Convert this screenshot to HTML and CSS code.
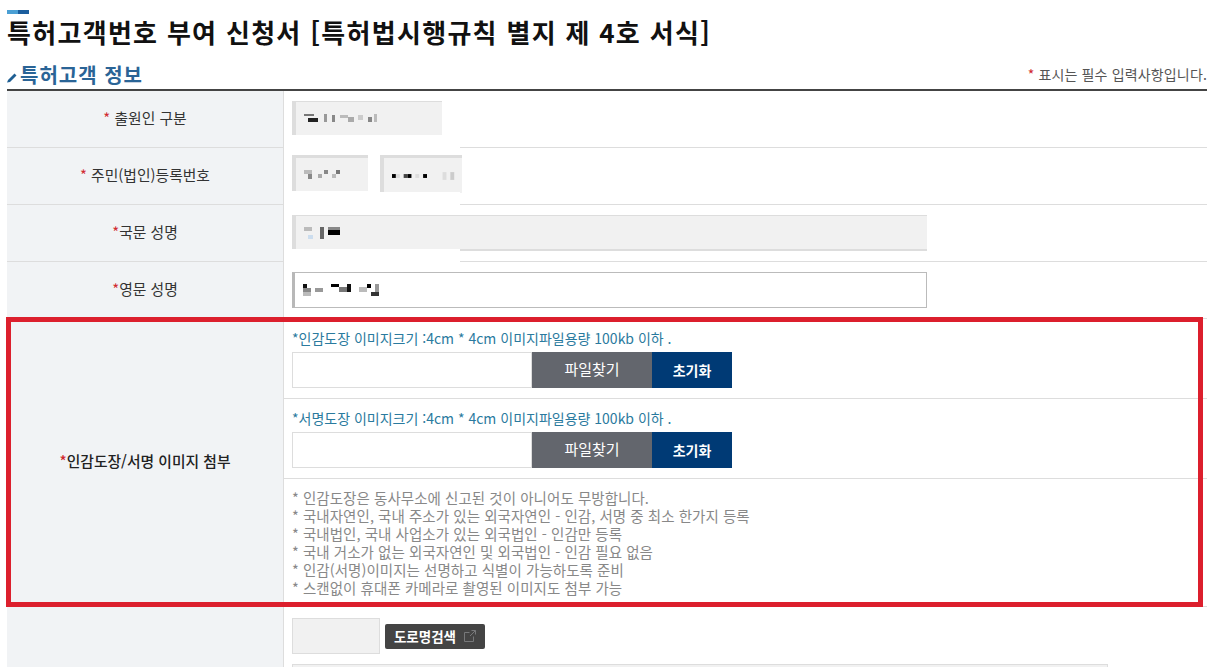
FILE: index.html
```html
<!DOCTYPE html>
<html lang="ko">
<head>
    <meta charset="UTF-8">
    <title>특허고객번호 부여 신청서</title>
    <link rel="stylesheet" href="styles.css">
</head>
<body>
    <div class="page">
        <div class="title-mark"></div>
        <h1>특허고객번호 부여 신청서 [특허법시행규칙 별지 제 4호 서식]</h1>

        <div class="section-head">
            <h2>
                <svg class="pencil" width="10" height="10" viewBox="0 0 10 10"><path d="M0 9.5 L1 7 L7.5 0.5 L9.5 2.5 L3 9 Z" fill="#1f5f93"/></svg>특허고객 정보
            </h2>
            <p class="required-note"><span class="star">*</span> 표시는 필수 입력사항입니다.</p>
        </div>

        <div class="form">
            <div class="row row-plain">
                <div class="label"><span><span class="star">*</span> 출원인 구분</span></div>
                <div class="cell">
                    <div class="field field-kind">
                        <svg class="mosaic" width="76" height="10" viewBox="0 0 76 10">
                            <rect x="0" y="0" width="10" height="2" fill="#777"/><rect x="4" y="4" width="10" height="4" fill="#222"/><rect x="20" y="0" width="3" height="8" fill="#999"/><rect x="28" y="1" width="3" height="7" fill="#888"/><rect x="36" y="1" width="8" height="3" fill="#bbb"/><rect x="44" y="3" width="6" height="5" fill="#aaa"/><rect x="54" y="1" width="5" height="5" fill="#ccc"/><rect x="64" y="3" width="4" height="5" fill="#888"/><rect x="70" y="0" width="3" height="8" fill="#bbb"/>
                        </svg>
                    </div>
                    <div class="patch"></div>
                </div>
            </div>
            <div class="row row-plain">
                <div class="label"><span><span class="star">*</span> 주민(법인)등록번호</span></div>
                <div class="cell cell-pair">
                    <div class="field field-short">
                        <svg class="mosaic" width="44" height="10" viewBox="0 0 44 10">
                            <rect x="0" y="0" width="8" height="4" fill="#bbb"/><rect x="4" y="4" width="4" height="5" fill="#888"/><rect x="14" y="4" width="4" height="4" fill="#aaa"/><rect x="20" y="0" width="4" height="4" fill="#888"/><rect x="28" y="4" width="4" height="4" fill="#bbb"/><rect x="32" y="0" width="4" height="4" fill="#777"/>
                        </svg>
                    </div>
                    <div class="field field-short2">
                        <svg class="mosaic" width="72" height="8" viewBox="0 0 72 8">
                            <rect x="0" y="2" width="4" height="4" fill="#000"/><rect x="4" y="2" width="4" height="4" fill="#ddd"/><rect x="12" y="2" width="4" height="4" fill="#444"/><rect x="16" y="2" width="4" height="4" fill="#000"/><rect x="24" y="2" width="4" height="4" fill="#ddd"/><rect x="32" y="2" width="4" height="4" fill="#000"/><rect x="52" y="0" width="4" height="8" fill="#ddd"/><rect x="60" y="0" width="4" height="8" fill="#ccc"/>
                        </svg>
                    </div>
                    <div class="patch"></div>
                </div>
            </div>
            <div class="row row-plain">
                <div class="label"><span><span class="star">*</span>국문 성명</span></div>
                <div class="cell">
                    <div class="field field-wide">
                        <svg class="mosaic" width="40" height="14" viewBox="0 0 40 14">
                            <rect x="0" y="1" width="8" height="4" fill="#bbb"/><rect x="4" y="9" width="5" height="4" fill="#cde"/><rect x="16" y="1" width="4" height="12" fill="#666"/><rect x="24" y="1" width="12" height="3" fill="#888"/><rect x="24" y="4" width="12" height="5" fill="#000"/>
                        </svg>
                    </div>
                    <div class="patch"></div>
                </div>
            </div>
            <div class="row row-plain">
                <div class="label"><span><span class="star">*</span>영문 성명</span></div>
                <div class="cell">
                    <div class="field field-wide field-white">
                        <svg class="mosaic" width="78" height="12" viewBox="0 0 78 12">
                            <rect x="0" y="0" width="4" height="4" fill="#111"/><rect x="0" y="4" width="8" height="4" fill="#888"/><rect x="0" y="8" width="8" height="4" fill="#bbb"/><rect x="12" y="4" width="8" height="4" fill="#999"/><rect x="28" y="0" width="8" height="3" fill="#000"/><rect x="36" y="3" width="8" height="5" fill="#777"/><rect x="44" y="0" width="4" height="8" fill="#111"/><rect x="56" y="3" width="8" height="5" fill="#bbb"/><rect x="64" y="0" width="4" height="4" fill="#000"/><rect x="72" y="0" width="4" height="12" fill="#999"/><rect x="68" y="8" width="8" height="4" fill="#333"/>
                        </svg>
                    </div>
                </div>
            </div>

            <div class="row row-stamp">
                <div class="label"><span class="label-dark"><span class="star">*</span>인감도장/서명 이미지 첨부</span></div>
                <div class="cell-stack">
                    <div class="upload">
                        <p class="hint">*인감도장 이미지크기 :4cm * 4cm 이미지파일용량 100kb 이하 .</p>
                        <div class="file-line">
                            <div class="file-name"></div>
                            <button class="btn-find">파일찾기</button>
                            <button class="btn-reset">초기화</button>
                        </div>
                    </div>
                    <div class="upload">
                        <p class="hint">*서명도장 이미지크기 :4cm * 4cm 이미지파일용량 100kb 이하 .</p>
                        <div class="file-line">
                            <div class="file-name"></div>
                            <button class="btn-find">파일찾기</button>
                            <button class="btn-reset">초기화</button>
                        </div>
                    </div>
                    <ul class="notes">
                        <li>* 인감도장은 동사무소에 신고된 것이 아니어도 무방합니다.</li>
                        <li>* 국내자연인, 국내 주소가 있는 외국자연인 - 인감, 서명 중 최소 한가지 등록</li>
                        <li>* 국내법인, 국내 사업소가 있는 외국법인 - 인감만 등록</li>
                        <li>* 국내 거소가 없는 외국자연인 및 외국법인 - 인감 필요 없음</li>
                        <li>* 인감(서명)이미지는 선명하고 식별이 가능하도록 준비</li>
                        <li>* 스캔없이 휴대폰 카메라로 촬영된 이미지도 첨부 가능</li>
                    </ul>
                </div>
                <div class="red-box"></div>
            </div>

            <div class="row row-address">
                <div class="label"></div>
                <div class="cell-address">
                    <div class="zip-line">
                        <div class="zip"></div>
                        <button class="btn-road">도로명검색
                            <svg width="12" height="12" viewBox="0 0 12 12" fill="none" stroke="#77787a"><path d="M9.5 6.5V11.5H0.5V2.5H5.5"/><path d="M7.5 0.5H11.5V4.5M11.5 0.5L6 6"/></svg>
                        </button>
                    </div>
                    <div class="address"></div>
                </div>
            </div>
        </div>
    </div>
</body>
</html>
```

FILE: styles.css
```css
html, body {
    margin: 0;
    height: 100%;
    overflow: hidden;
    background-color: #fff;
}

body {
    font-family: "Noto Sans CJK KR", "Noto Sans", sans-serif;
    color: #333;
}

.page {
    width: 1200px;
    margin-left: 7px;
    padding-top: 10px;
}

.title-mark {
    width: 22px;
    height: 4px;
    background: linear-gradient(to right, #4a9fd4 50%, #1b5e9e 50%);
}

h1 {
    margin: 0 0 3px;
    font-size: 26px;
    line-height: 36px;
    font-weight: 700;
    color: #111;
    letter-spacing: 1.3px;
}

.section-head {
    display: flex;
    justify-content: space-between;
    align-items: flex-end;
    height: 36px;
    border-bottom: 2px solid #444;
}

h2 {
    margin: 0;
    font-size: 20px;
    line-height: 28px;
    font-weight: 700;
    color: #2a6496;
    letter-spacing: 1px;
}

.pencil {
    margin-right: 3px;
}

.required-note {
    margin: 0 0 6px;
    font-size: 14px;
    line-height: 18px;
    color: #555;
    letter-spacing: 0.15px;
}

.star {
    color: #d0282e;
}

.row {
    display: flex;
    border-bottom: 1px solid #ddd;
}

.row-plain {
    height: 56px;
}

.label {
    box-sizing: border-box;
    flex: 0 0 277px;
    display: flex;
    align-items: center;
    justify-content: center;
    padding-bottom: 4px;
    background-color: #f1f3f5;
    border-right: 1px solid #ddd;
    font-size: 14.8px;
    color: #333;
}

.label-dark {
    color: #222;
    font-weight: 500;
}

.cell {
    position: relative;
    flex: 1;
    display: flex;
    gap: 12px;
    padding: 10px 0 0 8px;
}

/* 가림 처리된 부분 */
.patch {
    position: absolute;
    left: 0;
    bottom: -1px;
    width: 176px;
    height: 13px;
    background-color: #fff;
}

.field {
    box-sizing: border-box;
    display: flex;
    align-items: center;
    height: 36px;
    padding-left: 8px;
    background-color: #f1f1f1;
    border-top: 3px solid #ddd;
    border-left: 4px solid #ddd;
}

.field-kind {
    width: 150px;
    height: 34px;
    border-top-width: 1px;
}

.field-short {
    width: 76px;
    margin-top: -3px;
}

.field-short2 {
    width: 82px;
    margin-top: -3px;
    height: 38px;
}

.field-wide {
    width: 635px;
    border-top-width: 1px;
    border-bottom: 2px solid #ddd;
}

.field-white {
    background-color: #fff;
    border: 1px solid #bbb;
    border-left: 3px solid #b8b8b8;
}

.mosaic {
    display: block;
}

.row-stamp {
    position: relative;
    height: 287px;
    border-bottom: 1px solid #ddd;
}

.red-box {
    position: absolute;
    left: -1px;
    top: -2px;
    width: 1187px;
    height: 280px;
    border: 5px solid #dc1f2d;
    pointer-events: none;
}

.cell-stack {
    flex: 1;
    display: flex;
    flex-direction: column;
}

.upload {
    height: 79px;
    padding-left: 8px;
    border-bottom: 1px solid #ddd;
}

.hint {
    margin: 0;
    padding-top: 10px;
    font-size: 14px;
    line-height: 18px;
    color: #2a7a9e;
}

.file-line {
    display: flex;
    margin-top: 5px;
    height: 36px;
}

.file-name {
    box-sizing: border-box;
    width: 240px;
    background-color: #fff;
    border: 1px solid #ddd;
}

button {
    border: none;
    font-family: inherit;
    font-size: 14px;
    color: #fff;
    padding: 0;
    cursor: pointer;
}

.btn-find {
    width: 120px;
    padding-bottom: 4px;
    background-color: #63666d;
    font-size: 15px;
}

.btn-reset {
    width: 80px;
    background-color: #003a75;
    font-weight: 700;
}

.notes {
    list-style: none;
    margin: 0;
    padding: 10px 0 0 8px;
    font-size: 14.5px;
    line-height: 18px;
    color: #888;
    letter-spacing: 0.05px;
}

.row-address {
    height: 60px;
    border-bottom: none;
}

.cell-address {
    flex: 1;
    padding: 11px 0 0 8px;
}

.zip-line {
    display: flex;
    align-items: center;
    gap: 5px;
}

.zip {
    box-sizing: border-box;
    width: 88px;
    height: 36px;
    background-color: #f1f1f1;
    border: 1px solid #ddd;
}

.btn-road {
    display: flex;
    align-items: center;
    justify-content: center;
    gap: 8px;
    width: 100px;
    height: 25px;
    background-color: #444;
    border-radius: 2px;
    font-size: 13.5px;
    font-weight: 700;
}

.address {
    box-sizing: border-box;
    width: 816px;
    height: 36px;
    margin-top: 10px;
    background-color: #f1f1f1;
    border: 1px solid #ddd;
}
```
